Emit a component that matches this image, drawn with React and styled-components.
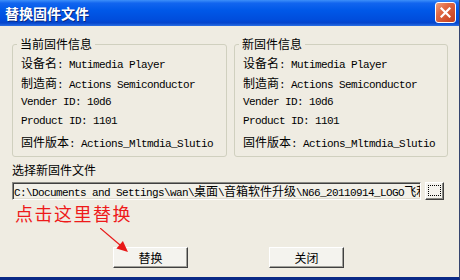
import React from 'react';
import styled, { createGlobalStyle } from 'styled-components';

const CJK = '"Noto Sans CJK SC", "Noto Sans", sans-serif';
const MONO = '"Liberation Mono", "DejaVu Sans Mono", monospace';

const GlobalStyle = createGlobalStyle`
  html, body {
    margin: 0;
    padding: 0;
    background: #efece2;
  }
  body {
    font-family: ${CJK};
  }
`;

const currentInfo = [
  ['设备名', ': Mutimedia Player'],
  ['制造商', ': Actions Semiconductor'],
  ['', 'Vender ID: 10d6'],
  ['', 'Product ID: 1101'],
  ['固件版本', ': Actions_Mltmdia_Slutio'],
];

const newInfo = currentInfo;

const path = 'C:\\Documents and Settings\\wan\\桌面\\音箱软件升级\\N66_20110914_LOGO飞利浦\\';

// splits a string into ascii runs and han runs, han runs get the CJK font
function Mixed({ text }) {
  return text.split(/([\u3000-\u9fff\uff00-\uffef]+)/).map((part, i) =>
    i % 2 ? <Han key={i}>{part}</Han> : <React.Fragment key={i}>{part}</React.Fragment>
  );
}

function InfoGroup({ title, rows }) {
  return (
    <Group>
      <Legend>{title}</Legend>
      {rows.map(([label, value], i) => (
        <InfoRow key={i}>
          {label && <Han>{label}</Han>}
          {value}
        </InfoRow>
      ))}
    </Group>
  );
}

export default function App() {
  return (
    <>
      <GlobalStyle />
      <Window>
        <TitleBar>
          <Title>替换固件文件</Title>
          <CloseButton>
            <svg width="11" height="11" viewBox="0 0 11 11">
              <path d="M1.5 1.5 L9.5 9.5 M9.5 1.5 L1.5 9.5" stroke="#fff" strokeWidth="2.2" strokeLinecap="square" />
            </svg>
          </CloseButton>
        </TitleBar>
        <Body>
          <Groups>
            <InfoGroup title="当前固件信息" rows={currentInfo} />
            <InfoGroup title="新固件信息" rows={newInfo} />
          </Groups>
          <FieldLabel>选择新固件文件</FieldLabel>
          <PathRow>
            <PathField><Mixed text={path} /></PathField>
            <BrowseButton><Focus /></BrowseButton>
          </PathRow>
          <Footer>
            <Hint>点击这里替换</Hint>
            <Arrow width="30" height="26" viewBox="0 0 30 26">
              <line x1="0" y1="0" x2="20" y2="17" stroke="#e81818" strokeWidth="1.2" />
              <polygon points="28,24 16.4,20.6 22.9,13" fill="#e81818" />
            </Arrow>
            <Buttons>
              <Button>替换</Button>
              <Button>关闭</Button>
            </Buttons>
          </Footer>
        </Body>
      </Window>
    </>
  );
}

const Window = styled.div`
  width: 460px;
  height: 280px;
  box-sizing: border-box;
  display: flex;
  flex-direction: column;
  background: #efece2;
  border-bottom: 3px solid #0b2a86;
  border-right: 1px solid #34446e;
  overflow: hidden;
`;

const TitleBar = styled.div`
  height: 26px;
  flex-shrink: 0;
  display: flex;
  align-items: center;
  justify-content: space-between;
  padding: 0 3px 0 5px;
  background: linear-gradient(
    to bottom,
    #3d8ff9 0%,
    #1265ef 12%,
    #0058e8 40%,
    #004ddc 75%,
    #0545cc 88%,
    #2a6fe4 100%
  );
`;

const Title = styled.div`
  color: #fff;
  font-family: ${CJK};
  font-weight: bold;
  font-size: 14px;
  line-height: 16px;
  text-shadow: 1px 1px 0 #0a2a80;
`;

const CloseButton = styled.div`
  width: 21px;
  height: 21px;
  box-sizing: border-box;
  margin-top: -1px;
  border: 1px solid #fff;
  border-radius: 3px;
  background: linear-gradient(135deg, #f0a080 0%, #e06a45 35%, #cf4d2a 75%, #c2401f 100%);
  display: flex;
  align-items: center;
  justify-content: center;
`;

const Body = styled.div`
  flex: 1;
  display: flex;
  flex-direction: column;
  padding: 11px 11px 0 12px;
`;

const Groups = styled.div`
  display: grid;
  grid-template-columns: 215px 214px;
  column-gap: 7px;
`;

const Group = styled.fieldset`
  margin: 0;
  min-width: 0;
  padding: 2px 8px 4px 8px;
  border: 1px solid #d0d0bf;
  border-radius: 3px;
`;

const Legend = styled.legend`
  margin-left: -4px;
  padding: 0 3px;
  font-family: ${CJK};
  font-size: 12px;
  line-height: 14px;
  color: #000;
`;

const InfoRow = styled.div`
  height: 19.75px;
  line-height: 19.75px;
  white-space: nowrap;
  font-family: ${MONO};
  font-size: 11px;
  letter-spacing: -0.6px;
  color: #000;
`;

const Han = styled.span`
  font-family: ${CJK};
  font-size: 12px;
  letter-spacing: 0;
`;

const FieldLabel = styled.div`
  margin-top: 6px;
  font-family: ${CJK};
  font-size: 12px;
  line-height: 14px;
  color: #000;
`;

const PathRow = styled.div`
  display: flex;
  align-items: flex-start;
  gap: 4px;
  margin-top: 5px;
`;

const PathField = styled.div`
  width: 409px;
  height: 18px;
  box-sizing: border-box;
  padding-left: 1px;
  border: 1px solid;
  border-color: #8a8a84 #fff #fff #8a8a84;
  box-shadow: inset 1px 1px 0 #404040, inset -1px -1px 0 #e2ded2;
  background: #f2f0e8;
  overflow: hidden;
  white-space: nowrap;
  font-family: ${MONO};
  font-size: 11px;
  letter-spacing: -0.6px;
  line-height: 16px;
  color: #000;
`;

const BrowseButton = styled.div`
  width: 19px;
  height: 18px;
  box-sizing: border-box;
  border: 1px solid;
  border-color: #fff #404040 #404040 #fff;
  box-shadow: inset -1px -1px 0 #8a8a84;
  background: #f4f3ee;
  display: flex;
  align-items: center;
  justify-content: center;
`;

const Focus = styled.span`
  width: 11px;
  height: 9px;
  border: 1px dotted #000;
`;

const Footer = styled.div`
  position: relative;
  margin-top: 3px;
`;

const Hint = styled.div`
  margin-left: 3px;
  font-family: ${CJK};
  font-size: 18px;
  line-height: 20px;
  letter-spacing: 1.5px;
  color: #ee1a1a;
`;

const Arrow = styled.svg`
  position: absolute;
  left: 88px;
  top: 25px;
`;

const Buttons = styled.div`
  display: flex;
  gap: 81px;
  margin-top: 24px;
  padding-left: 101px;
`;

const Button = styled.div`
  width: 75px;
  height: 21px;
  box-sizing: border-box;
  border: 1px solid;
  border-color: #fff #404040 #404040 #fff;
  box-shadow: inset -1px -1px 0 #a0a09a;
  background: #f4f3ee;
  display: flex;
  align-items: center;
  justify-content: center;
  font-family: ${CJK};
  font-size: 12px;
  color: #000;
`;
